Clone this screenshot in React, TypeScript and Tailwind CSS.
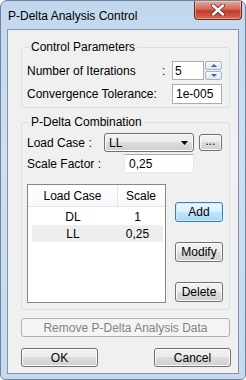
import React from 'react';

const font = "font-['Liberation_Sans',Arial,sans-serif]";
const winButton =
  'flex items-center justify-center rounded-[3px] border border-[#707070] bg-[linear-gradient(#f2f2f2_0%,#ebebeb_50%,#dddddd_50%,#cfcfcf_100%)] text-[12px] text-black shadow-[inset_0_0_0_1px_#fcfcfc]';

function CloseButton() {
  return (
    <div className="-mr-[3px] flex h-[19px] w-[48px] items-center justify-center rounded-b-[4px] border border-t-0 border-[#6b2a20] bg-[linear-gradient(#e9a99a_0%,#d0685a_45%,#c0392b_55%,#d66b52_100%)] shadow-[inset_0_0_0_1px_rgba(255,255,255,0.35)]">
      <svg width="14" height="12" viewBox="0 0 14 12">
        <path d="M2 1.5 L12 10.5 M12 1.5 L2 10.5" stroke="#5a2a22" strokeWidth="4" strokeLinecap="round" />
        <path d="M2 1.5 L12 10.5 M12 1.5 L2 10.5" stroke="#ffffff" strokeWidth="2.4" strokeLinecap="round" />
      </svg>
    </div>
  );
}

function SpinButtons() {
  return (
    <div className="ml-[1px] flex h-[19px] w-[17px] flex-col gap-[1px]">
      {['M2 5 L5 2 L8 5 Z', 'M2 2 L5 5 L8 2 Z'].map((d) => (
        <div
          key={d}
          className="flex flex-1 items-center justify-center rounded-[2px] border border-[#a8b3c2] bg-[linear-gradient(#f7f9fc,#dfe6ef)]"
        >
          <svg width="10" height="7" viewBox="0 0 10 7">
            <path d={d} fill="#3f5f9a" />
          </svg>
        </div>
      ))}
    </div>
  );
}

const rows = [
  { name: 'DL', scale: '1', selected: false },
  { name: 'LL', scale: '0,25', selected: true },
];

export default function App() {
  return (
    <div className={`${font} h-[380px] w-[246px] bg-white text-[12px] leading-[14px] text-black`}>
      <div className="flex h-full flex-col rounded-t-[7px] rounded-b-[5px] border border-[#6d829b] bg-[linear-gradient(#c2d7ee,#cfdff2_40%,#c6d9ee)] px-[6px] pb-[5px]">
        {/* title bar */}
        <div className="flex h-[28px] items-start justify-between">
          <div className="pl-[1px] pt-[8px] text-[12px] text-black">P-Delta Analysis Control</div>
          <CloseButton />
        </div>

        {/* client area */}
        <div className="flex flex-1 flex-col border border-[#8395ad] bg-[#f0f0f0] pl-[13px] pr-[8px]">
          <fieldset className="mt-[10px] rounded-[3px] border border-[#d5dfe5] px-[5px] pb-[3px]">
            <legend className="ml-[2px] px-[2px] leading-[14px]">Control Parameters</legend>
            <div className="mt-[7px] flex h-[19px] items-center">
              <span className="w-[135px]">Number of Iterations</span>
              <span className="w-[10px]">:</span>
              <div className="flex h-[19px] w-[32px] items-center border border-[#abadb3] bg-white pl-[2px]">
                5
              </div>
              <SpinButtons />
            </div>
            <div className="mt-[4px] flex h-[20px] items-center">
              <span className="w-[145px]">Convergence Tolerance:</span>
              <div className="flex h-[20px] w-[50px] items-center border border-[#abadb3] bg-white pl-[3px]">
                1e-005
              </div>
            </div>
          </fieldset>

          <fieldset className="mt-[7px] rounded-[3px] border border-[#d5dfe5] px-[5px] pb-[6px]">
            <legend className="ml-[2px] px-[2px] leading-[14px]">P-Delta Combination</legend>
            <div className="mt-[4px] flex h-[19px] items-center">
              <span className="w-[77px]">Load Case :</span>
              <div className="flex h-[19px] w-[90px] items-center justify-between rounded-[3px] border border-[#707070] bg-[linear-gradient(#f2f2f2_0%,#ebebeb_50%,#dddddd_50%,#cfcfcf_100%)] pl-[4px] pr-[5px] shadow-[inset_0_0_0_1px_#fcfcfc]">
                <span>LL</span>
                <svg width="7" height="4" viewBox="0 0 7 4">
                  <path d="M0 0 L7 0 L3.5 4 Z" fill="#000" />
                </svg>
              </div>
              <div className={`${winButton} ml-[5px] h-[17px] w-[23px] pb-[4px] text-[10px]`}>...</div>
            </div>
            <div className="mt-[2px] flex h-[19px] items-center">
              <span className="w-[97px]">Scale Factor :</span>
              <div className="flex h-[19px] w-[70px] items-center border border-[#e3e9ef] border-t-[#abadb3] bg-white pl-[4px]">
                0,25
              </div>
            </div>
            <div className="mt-[11px] flex">
              <div className="ml-[0px] flex h-[119px] w-[139px] flex-col border border-[#828790] bg-white">
                <div className="flex h-[22px] border-b border-[#e5e5e5] bg-[linear-gradient(#ffffff,#f7f8fa)]">
                  <div className="flex w-[90px] items-center justify-center border-r border-[#e5e5e5]">Load Case</div>
                  <div className="flex w-[46px] items-center justify-center">Scale</div>
                </div>
                <div className="pt-[1px]">
                  {rows.map((r) => (
                    <div
                      key={r.name}
                      className={`ml-[4px] mr-[2px] flex h-[17px] items-center ${r.selected ? 'bg-[#eeeeee]' : ''}`}
                    >
                      <span className="w-[82px] text-center">{r.name}</span>
                      <span className="w-[47px] text-center">{r.scale}</span>
                    </div>
                  ))}
                </div>
              </div>
              <div className="ml-[9px] flex w-[48px] flex-col pt-[18px]">
                <div className="flex h-[20px] items-center justify-center rounded-[3px] border border-[#3c7fb1] bg-[linear-gradient(#eaf6fd_0%,#d9f0fc_50%,#bee6fd_50%,#a7d9f5_100%)] shadow-[inset_0_0_0_1px_#c9ecfd]">
                  Add
                </div>
                <div className={`${winButton} mt-[20px] h-[20px]`}>Modify</div>
                <div className={`${winButton} mt-[20px] h-[20px]`}>Delete</div>
              </div>
            </div>
          </fieldset>

          <div className="mt-[8px] flex h-[19px] items-center justify-center rounded-[3px] border border-[#adb2b5] bg-[#f4f4f4] text-[#838383]">
            Remove P-Delta Analysis Data
          </div>

          <div className="mt-[11px] flex justify-between">
            <div className={`${winButton} h-[19px] w-[77px]`}>OK</div>
            <div className={`${winButton} mr-[-1px] h-[19px] w-[77px]`}>Cancel</div>
          </div>
        </div>
      </div>
    </div>
  );
}
